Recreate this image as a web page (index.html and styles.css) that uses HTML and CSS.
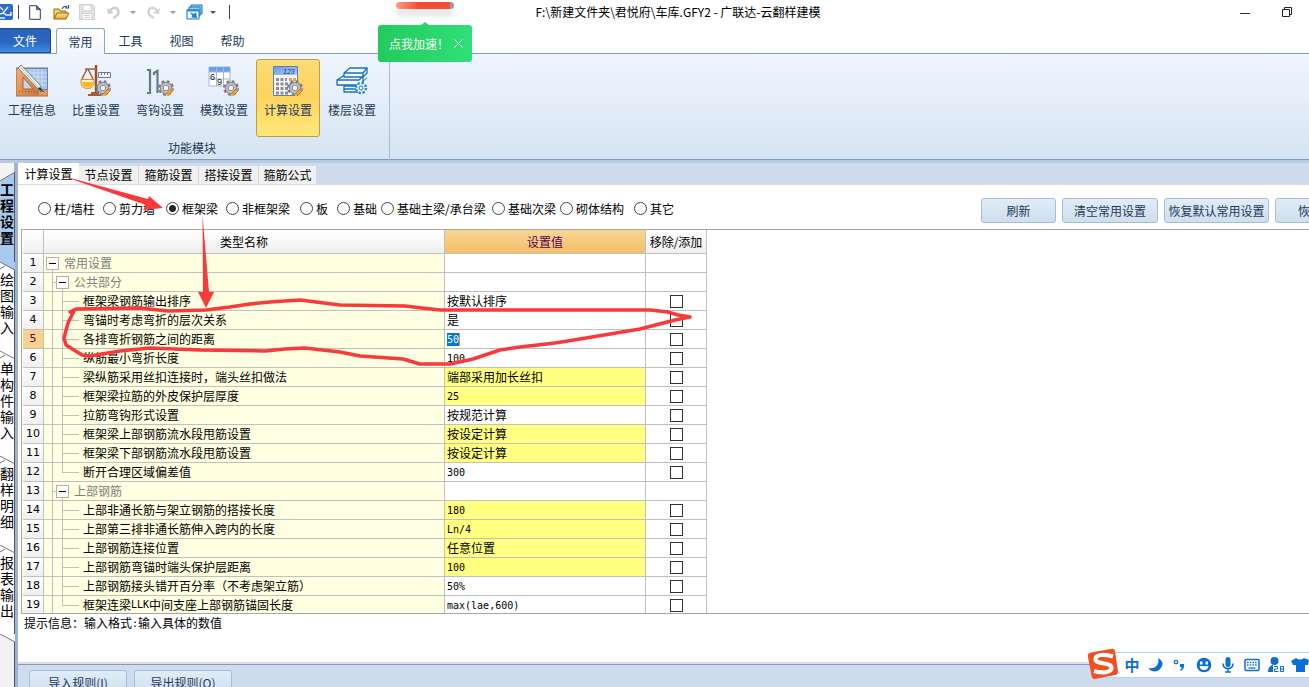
FILE: index.html
```html
<!DOCTYPE html>
<html lang="zh-CN">
<head>
<meta charset="utf-8">
<title>广联达-云翻样建模</title>
<link rel="stylesheet" href="styles.css">
</head>
<body>
<svg class="defs" width="0" height="0" aria-hidden="true">
  <defs>
    <linearGradient id="wood" x1="0" y1="0" x2="1" y2="1"><stop offset="0" stop-color="#f0b070"/><stop offset="1" stop-color="#c9743a"/></linearGradient>
    <linearGradient id="sky" x1="0" y1="0" x2="1" y2="1"><stop offset="0" stop-color="#6f9be8"/><stop offset="1" stop-color="#a9c8fa"/></linearGradient>
    <linearGradient id="folder" x1="0" y1="0" x2="0" y2="1"><stop offset="0" stop-color="#ffe389"/><stop offset="1" stop-color="#eba92c"/></linearGradient>
    <symbol id="gear" viewBox="0 0 17 17">
      <circle cx="8" cy="8" r="6.500" fill="none" stroke="#7c7c80" stroke-width="2.800" stroke-dasharray="2.700 2.400"/>
      <circle cx="8" cy="8" r="4.200" fill="none" stroke="#85858a" stroke-width="4"/>
      <circle cx="8" cy="8" r="4.200" fill="none" stroke="#bdbdc2" stroke-width="2.200"/>
      <circle cx="8" cy="8" r="2.200" fill="#eef3fa"/>
      <path d="M8 16l1-3 4-4 2 2-4 4z" fill="#f7a31c" stroke="#b76412" stroke-width=".6"/>
      <path d="M13.300 8.500l1.200-1.200 1.800 1.800-1.200 1.200z" fill="#c38bd0"/><path d="M8 16l.7-2 1.300 1.300z" fill="#f8e0b0"/>
    </symbol>
  </defs>
</svg>

<div class="window">
  <header class="titlebar">
    <div class="quick">
      <span class="q q-logo"><svg width="14" height="16" viewBox="0 0 14 16"><path d="M0 0h11q2 0 2 2v12q0 2-2 2H0z" fill="#2a6fd0"/><path d="M0 3l3 3M8 3L3 9M0 10q4-2 6 1h5v-3M0 14h5" fill="none" stroke="#e8f2ff" stroke-width="1.500"/></svg></span>
      <span class="q q-sep"><i class="bar"></i></span>
      <button class="q q-new" aria-label="新建"><svg width="12" height="15" viewBox="0 0 12 15"><path d="M.7.700h7l3.600 3.600v10H.7z" fill="#fff" stroke="#2e3f63"/><path d="M7.500.700v4h4z" fill="#4b76b8" stroke="#2e3f63" stroke-width=".7"/></svg></button>
      <button class="q q-open" aria-label="打开"><svg width="17" height="15" viewBox="0 0 17 15"><path d="M1 14V4h5l1 2h6v2" fill="#f9d36b" stroke="#8f6a1b"/><path d="M1 14l3-6h12l-3 6z" fill="url(#folder)" stroke="#8f6a1b"/><path d="M9 4q2-4 5-2M12 3h3.500V0" fill="none" stroke="#35536b" stroke-width="1.200"/></svg></button>
      <button class="q q-save" aria-label="保存"><svg width="16" height="16" viewBox="0 0 16 16"><path d="M.5.500h13l2 2v13H.5z" fill="#e4e4e4" stroke="#d0d0d0"/><path d="M4 1h8v6H4z" fill="#fff" stroke="#d0d0d0"/><path d="M3 9.500h10v6H3zM5 11.500h6M5 13.500h6" fill="#fff" stroke="#d0d0d0"/></svg></button>
      <button class="q q-undo" aria-label="撤销"><svg width="13" height="13" viewBox="0 0 13 13"><path d="M2 5q7-6 9-1t-5 8" fill="none" stroke="#cdcdcd" stroke-width="2.400"/><path d="M0 2l1 6 6-1z" fill="#cdcdcd"/></svg></button>
      <button class="q q-caret" aria-label="撤销列表"><i class="caret dim"></i></button>
      <button class="q q-undo" aria-label="恢复"><svg width="13" height="13" viewBox="0 0 13 13"><path d="M11 5Q4-1 2 4t5 8" fill="none" stroke="#d3d3d3" stroke-width="2.400"/><path d="M13 2l-1 6-6-1z" fill="#d3d3d3"/></svg></button>
      <button class="q q-caret" aria-label="恢复列表"><i class="caret dim"></i></button>
      <button class="q q-win" aria-label="窗口"><svg width="17" height="16" viewBox="0 0 17 16"><path d="M5 1h11v9H5z" fill="#9cd2f5" stroke="#2272b8"/><path d="M3 3h11v9H3z" fill="#9cd2f5" stroke="#2272b8"/><path d="M1 5.500h12v9.500H1z" fill="#f4fbff" stroke="#2272b8"/><path d="M1 5h12v2.500H1z" fill="#2e8fd8"/><path d="M4 8l4 2 2-2 1 6-6-.5 1.500-1.500z" fill="#1383d8"/></svg></button>
      <button class="q q-more" aria-label="更多"><i class="caret"></i></button>
      <span class="q q-end"><i class="bar"></i></span>
    </div>
    <h1 class="caption">F:\新建文件夹\君悦府\车库.GFY2 - 广联达-云翻样建模</h1>
    <div class="controls">
      <button aria-label="最小化"><svg width="10" height="10"><path d="M0 5.500h10" stroke="#333"/></svg></button>
      <button aria-label="还原"><svg width="11" height="11"><path d="M.5 2.500h7v7h-7zM2.500 2.500v-2h7v7h-2" fill="none" stroke="#222"/></svg></button>
    </div>
  </header>

  <nav class="menus">
    <button class="menu file">文件</button>
    <button class="menu current">常用</button>
    <button class="menu">工具</button>
    <button class="menu">视图</button>
    <button class="menu">帮助</button>
  </nav>

  <section class="ribbon">
    <div class="group">
      <div class="tools">
        <button class="tool"><svg width="32" height="32" viewBox="0 0 32 32"><path d="M0 3h32v28H0z" fill="#e09a5c" stroke="#b0683a"/><path d="M6 3.500h25.500v21H6z" fill="#aac3e6" stroke="#6482b4"/><path d="M10 4v21M14 4v21M18 4v21M22 4v21M26 4v21M6 8h25M6 12h25M6 16h25M6 20h25" stroke="#d5e3f6" stroke-width=".8"/><path d="M1 4h4l18 21v5H1z" fill="url(#wood)"/><path d="M7 12l10 12H7z" fill="#c5d6ec" stroke="#a5622f"/><path d="M3 26.500h27" stroke="#8b522e" stroke-dasharray="1 2"/><path d="M2 3l3-3 19 20 3 6-6-3z" fill="#eef1ef" stroke="#74827f"/><path d="M4 2l19 21" stroke="#b4c0be"/><path d="M24 22l3.500 5-5.500-3z" fill="#12365a"/></svg>工程信息</button>
        <button class="tool"><svg width="32" height="32" viewBox="0 0 32 32"><path d="M8 30h13M11 28h8" stroke="#a85b33" stroke-width="2"/><path d="M16 0v28" stroke="#9d5130" stroke-width="2.500"/><path d="M5 4h11M7 4L2 14M8 4l5 10" fill="none" stroke="#a65e38" stroke-width="1.500"/><path d="M1 14.500h13q1 9-6.500 9t-6.500-9z" fill="#fff4c8" stroke="#d88b24"/><path d="M2 17h11q0 5.500-5.500 5.500T2 17z" fill="#ffb81e"/><path d="M18.500 7.500h12v5h-12z" fill="#f5f8fc" stroke="#637d96"/><path d="M21.500 8v2M24.500 8v2M27.500 8v2" stroke="#637d96"/><use href="#gear" x="15" y="15" width="17" height="17"/></svg>比重设置</button>
        <button class="tool"><svg width="32" height="32" viewBox="0 0 32 32"><path d="M3 5h3v23H3M10 10V8l3.500-2v22" fill="none" stroke="#66788a" stroke-width="2.200"/><use href="#gear" x="14" y="15" width="17" height="17"/></svg>弯钩设置</button>
        <button class="tool"><svg width="32" height="32" viewBox="0 0 32 32"><path d="M1 2h21v19H1z" fill="#fff" stroke="#a2b8d6"/><path d="M1 2h21v5H1z" fill="#6d9eed"/><path d="M8.500 2v19M15.500 2v19M1 7h21M1 14h21" stroke="#a2b8d6"/><text x="2" y="15" class="glyph">6</text><text x="9" y="20" class="glyph">9</text><use href="#gear" x="15" y="15" width="17" height="17"/></svg>模数设置</button>
        <button class="tool active"><svg width="32" height="32" viewBox="0 0 32 32"><path d="M1.500 1.500h24v29h-24z" fill="#f4f7fc" stroke="#5c7fae"/><path d="M2 2h23v8H2z" fill="url(#sky)"/><text x="11" y="9" class="lcd">123</text><g fill="none" stroke="#8c8c93" stroke-width="3" stroke-dasharray="3 1.500"><path d="M4 14.500h11M4 19h19M4 23.500h16M4 28h13"/></g><path d="M17 14.500h7" stroke="#e4a25c" stroke-width="3" stroke-dasharray="3 1"/><use href="#gear" x="15" y="15" width="17" height="17"/></svg>计算设置</button>
        <button class="tool"><svg width="32" height="32" viewBox="0 0 32 32"><g fill="#f2f8ff" stroke="#1a70bf" stroke-width="1.300" stroke-linejoin="round"><path d="M8 21h20v6H8z"/><path d="M1 15l6-4h20v9H1z"/><path d="M8 8l6-5h17v5l-4 4H8z"/><path d="M8 8h19l4-5M27 8v4M1 15h22l4-4M8 24h18" fill="none"/></g><path d="M31 13l-5 4" stroke="#1a70bf"/><circle cx="25" cy="23" r="5" fill="#e8f5ff" stroke="#2b91d0" stroke-width="2.500" stroke-dasharray="2.200 1.700"/><circle cx="25" cy="23" r="2" fill="#fff" stroke="#1a70bf"/></svg>楼层设置</button>
      </div>
      <div class="group-title">功能模块</div>
    </div>
  </section>

  <div class="workspace">
    <aside class="rail">
      <button class="side on"><svg width="15" height="18"><path d="M0 0h15v9L0 18z" fill="#f4f4f4"/><path d="M0 18l15-9V0" fill="none" stroke="#777"/></svg><b>工程设置</b></button>
      <button class="side"><svg width="15" height="9"><path d="M0 0l15 9V0z" fill="#a6caf0"/><path d="M0 0l15 8M0 7l5-3" fill="none" stroke="#777"/></svg><span>绘图输入</span></button>
      <button class="side"><svg width="15" height="9"><path d="M0 0l15 8M0 7l5-3" fill="none" stroke="#777"/></svg><span>单构件输入</span></button>
      <button class="side"><svg width="15" height="9"><path d="M0 0l15 8M0 7l5-3" fill="none" stroke="#777"/></svg><span>翻样明细</span></button>
      <button class="side"><svg width="15" height="9"><path d="M0 0l15 8M0 7l5-3" fill="none" stroke="#777"/></svg><span>报表输出</span></button>
      <svg class="tail" width="15" height="9"><path d="M0 0l15 8V0z" fill="#fff"/><path d="M0 0l15 8" stroke="#777"/></svg>
    </aside>

    <main class="page">
      <div class="tabs">
        <button class="tab on">计算设置</button>
        <button class="tab">节点设置</button>
        <button class="tab">箍筋设置</button>
        <button class="tab">搭接设置</button>
        <button class="tab">箍筋公式</button>
      </div>

      <div class="filters">
        <div class="radios">
          <label><input type="radio" name="part">柱/墙柱</label>
          <label><input type="radio" name="part">剪力墙</label>
          <label><input type="radio" name="part" checked>框架梁</label>
          <label><input type="radio" name="part">非框架梁</label>
          <label><input type="radio" name="part">板</label>
          <label><input type="radio" name="part">基础</label>
          <label><input type="radio" name="part">基础主梁/承台梁</label>
          <label><input type="radio" name="part">基础次梁</label>
          <label><input type="radio" name="part">砌体结构</label>
          <label><input type="radio" name="part">其它</label>
        </div>
        <div class="actions">
          <button class="btn short">刷新</button>
          <button class="btn mid">清空常用设置</button>
          <button class="btn long">恢复默认常用设置</button>
          <button class="btn rest">恢</button>
        </div>
      </div>

      <div class="sheet">
        <table>
          <colgroup><col class="c-no"><col class="c-name"><col class="c-val"><col class="c-chk"></colgroup>
          <thead><tr><th></th><th>类型名称</th><th class="hot">设置值</th><th>移除/添加</th></tr></thead>
          <tbody>
            <tr><th>1</th><td class="name"><div class="node root"><button class="fold" aria-label="折叠"></button>常用设置</div></td><td></td><td></td></tr>
            <tr><th>2</th><td class="name"><div class="node branch"><button class="fold" aria-label="折叠"></button>公共部分</div></td><td></td><td></td></tr>
            <tr><th>3</th><td class="name"><div class="node leaf">框架梁钢筋输出排序</div></td><td>按默认排序</td><td><input type="checkbox" aria-label="第3行"></td></tr>
            <tr><th>4</th><td class="name"><div class="node leaf">弯锚时考虑弯折的层次关系</div></td><td>是</td><td><input type="checkbox" aria-label="第4行"></td></tr>
            <tr><th class="hot">5</th><td class="name"><div class="node leaf">各排弯折钢筋之间的距离</div></td><td><input class="edit" type="text" value="50" aria-label="各排弯折钢筋之间的距离"></td><td><input type="checkbox" aria-label="第5行"></td></tr>
            <tr><th>6</th><td class="name"><div class="node leaf">纵筋最小弯折长度</div></td><td><span class="mono">100</span></td><td><input type="checkbox" aria-label="第6行"></td></tr>
            <tr><th>7</th><td class="name"><div class="node leaf">梁纵筋采用丝扣连接时，端头丝扣做法</div></td><td class="changed">端部采用加长丝扣</td><td><input type="checkbox" aria-label="第7行"></td></tr>
            <tr><th>8</th><td class="name"><div class="node leaf">框架梁拉筋的外皮保护层厚度</div></td><td class="changed"><span class="mono">25</span></td><td><input type="checkbox" aria-label="第8行"></td></tr>
            <tr><th>9</th><td class="name"><div class="node leaf">拉筋弯钩形式设置</div></td><td>按规范计算</td><td><input type="checkbox" aria-label="第9行"></td></tr>
            <tr><th>10</th><td class="name"><div class="node leaf">框架梁上部钢筋流水段甩筋设置</div></td><td class="changed">按设定计算</td><td><input type="checkbox" aria-label="第10行"></td></tr>
            <tr><th>11</th><td class="name"><div class="node leaf">框架梁下部钢筋流水段甩筋设置</div></td><td class="changed">按设定计算</td><td><input type="checkbox" aria-label="第11行"></td></tr>
            <tr><th>12</th><td class="name"><div class="node leaf last">断开合理区域偏差值</div></td><td><span class="mono">300</span></td><td><input type="checkbox" aria-label="第12行"></td></tr>
            <tr><th>13</th><td class="name"><div class="node branch"><button class="fold" aria-label="折叠"></button>上部钢筋</div></td><td></td><td></td></tr>
            <tr><th>14</th><td class="name"><div class="node leaf">上部非通长筋与架立钢筋的搭接长度</div></td><td class="changed"><span class="mono">180</span></td><td><input type="checkbox" aria-label="第14行"></td></tr>
            <tr><th>15</th><td class="name"><div class="node leaf">上部第三排非通长筋伸入跨内的长度</div></td><td class="changed"><span class="mono">Ln/4</span></td><td><input type="checkbox" aria-label="第15行"></td></tr>
            <tr><th>16</th><td class="name"><div class="node leaf">上部钢筋连接位置</div></td><td class="changed">任意位置</td><td><input type="checkbox" aria-label="第16行"></td></tr>
            <tr><th>17</th><td class="name"><div class="node leaf">上部钢筋弯锚时端头保护层距离</div></td><td class="changed"><span class="mono">100</span></td><td><input type="checkbox" aria-label="第17行"></td></tr>
            <tr><th>18</th><td class="name"><div class="node leaf">上部钢筋接头错开百分率（不考虑架立筋）</div></td><td><span class="mono">50%</span></td><td><input type="checkbox" aria-label="第18行"></td></tr>
            <tr><th>19</th><td class="name"><div class="node leaf last">框架连梁<span class="mono">LLK</span>中间支座上部钢筋锚固长度</div></td><td><span class="mono">max(lae,600)</span></td><td><input type="checkbox" aria-label="第19行"></td></tr>
          </tbody>
        </table>
      </div>
      <p class="hint">提示信息：输入格式<span class="mono">:</span>输入具体的数值</p>
      <footer class="footer">
        <button class="btn rule">导入规则(<u>I</u>)</button>
        <button class="btn rule">导出规则(<u>O</u>)</button>
      </footer>
    </main>
  </div>

  <div class="gauge"></div>
  <div class="boost"><span>点我加速！</span><button aria-label="关闭"><svg width="9" height="9"><path d="M.5.500l8 8M8.500.500l-8 8" stroke="#fff"/></svg></button></div>

  <div class="ime">
    <svg class="ime-logo" width="32" height="32" viewBox="0 0 32 32"><path d="M4 4.500L25 .7q2.500-.4 3 2l3 21q.3 2.400-2 3L8 31q-2.500.4-3.200-2L.8 8Q.5 5 4 4.500z" fill="#f0501e"/><path d="M26 8.500C18 5.500 8 6.500 8.500 11.500c.5 5 15.500 2.500 16 8 .4 5-10 6-17.500 3.500" fill="none" stroke="#fff" stroke-width="4.200"/></svg>
    <span class="ime-text">中</span>
    <svg width="24" height="16" viewBox="0 0 24 16"><path d="M14 1q6 3 4 8-3 7-10 5-3-1-3.500-3 5 1 8-2 3-4 1.500-8z" fill="#0a6fd6"/></svg>
    <svg width="24" height="16" viewBox="0 0 24 16"><circle cx="8" cy="5" r="1.700" fill="none" stroke="#0a6fd6" stroke-width="1.300"/><path d="M12 7h4q1 4-3 7l-1-1q2-1 1.500-3H12z" fill="#0a6fd6"/></svg>
    <svg width="24" height="16" viewBox="0 0 24 16"><circle cx="12" cy="8" r="7.300" fill="#0a6fd6"/><path d="M8 4.500h2.500v3H8zM13.500 4.500H16v3h-2.500zM7.500 9h9q-.5 4-4.500 4t-4.500-4z" fill="#fff"/></svg>
    <svg width="24" height="16" viewBox="0 0 24 16"><rect x="9.500" y="0" width="5" height="10" rx="2.500" fill="#0a6fd6"/><path d="M7 6.500q0 5 5 5t5-5M12 11v4M9 15h6" fill="none" stroke="#0a6fd6" stroke-width="1.500"/></svg>
    <svg width="24" height="16" viewBox="0 0 24 16"><rect x="5" y="2.500" width="14" height="11" rx="1" fill="#fff" stroke="#0a6fd6" stroke-width="1.500"/><path d="M7 5.500h10M7 8h10" stroke="#0a6fd6" stroke-width="1.500" stroke-dasharray="1.500 1.200"/><path d="M8.500 11h7" stroke="#0a6fd6" stroke-width="1.300"/></svg>
    <svg width="24" height="16" viewBox="0 0 24 16"><circle cx="10.500" cy="4" r="4" fill="#0a6fd6"/><path d="M4 15q0-6 4.500-7h4q3 1 3.500 3v4z" fill="#0a6fd6"/><path d="M9 8h12v8H9z" fill="#fff"/><path d="M10 9.500h3.500v2.500h-3v2.500h4M16.500 9.500h3v5h-3zM16.500 12h3" fill="none" stroke="#0a6fd6"/></svg>
    <svg width="24" height="16" viewBox="0 0 24 16"><path d="M8 1q4 3 8 0l5 2-1 5h-3v7H8V8H5L3 4z" fill="#0a6fd6"/></svg>
  </div>

  <svg class="marks" width="700" height="370" viewBox="0 0 700 370" aria-hidden="true">
    <g fill="#f93a3a">
      <path d="M61 175.500L148 199l1-3 14 12-20 2 3-5z"/>
      <path d="M202.500 215L209 292h5l-8 16-8-16h5z"/>
    </g>
    <path d="M70 312L76 309L140 308L168 311L206 310L230 307L250 304L270 302L300 300L340 305L405 306L422 308L440 310L650 310L668 312L678 315L690 317L675 320L640 329L610 334L580 339L555 343L520 347L500 350L473 359L450 364L420 364L403 359L360 356L340 352L305 348L285 349L265 351L200 350L150 348L120 351L90 356L82 355L66 345L64 338L68 323L74 311" fill="none" stroke="#f93a3a" stroke-width="3.500" stroke-linejoin="round" stroke-linecap="round"/>
  </svg>
</div>
</body>
</html>
```
FILE: styles.css
```css
* { box-sizing: border-box; }

body {
  margin: 0;
  font: 12px/18px "Noto Sans CJK SC", sans-serif;
  color: #000;
  background: #fff;
}

button {
  margin: 0;
  padding: 0;
  border: 0;
  background: none;
  font: inherit;
  color: inherit;
  white-space: nowrap;
}

.defs { position: absolute; }

.window {
  position: relative;
  display: flex;
  flex-direction: column;
  height: 100vh;
  overflow: hidden;
}

/* title bar */
.titlebar { display: flex; height: 28px; flex: none; }
.quick { display: flex; width: 240px; height: 24px; }
.q { display: flex; align-items: center; justify-content: center; flex: none; }
.q-logo { width: 14px; }
.q-sep { width: 9px; }
.q-new, .q-save { width: 24px; }
.q-open, .q-undo { width: 28px; }
.q-caret { width: 12px; }
.q-win { width: 30px; }
.q-more { width: 8px; }
.q-end { width: 24px; }
.bar { width: 1px; height: 14px; background: #444; }
.caret { border: 3px solid transparent; border-top-color: #555; border-bottom: 0; }
.caret.dim { border-top-color: #999; }

.caption {
  flex: 1;
  margin: 0;
  font-size: 12px;
  font-weight: 400;
  line-height: 24px;
  text-align: center;
  white-space: nowrap;
}

.controls { display: flex; justify-content: flex-end; width: 193px; height: 26px; }
.controls button { width: 43px; }

/* menu strip */
.menus {
  display: flex;
  flex: none;
  height: 26px;
  border-bottom: 1px solid #7d9cbf;
  color: #1e395b;
}
.menu { width: 51px; height: 25px; padding-top: 1px; }
.menu.file {
  margin-right: 5px;
  color: #fff;
  background: linear-gradient(#2a62b8, #2a66c0 55%, #3f8be0);
  border: 1px solid #1d4b93;
  border-left: 0;
  border-radius: 0 3px 0 0;
}
.menu.current {
  width: 49px;
  height: 26px;
  background: linear-gradient(#fff, #eff6ff);
  border: 1px solid #8ca8c6;
  border-bottom: 0;
  border-radius: 3px 3px 0 0;
}

/* ribbon */
.ribbon {
  flex: none;
  height: 109px;
  background: linear-gradient(#eff6ff, #d6e3f2);
  background-clip: padding-box;
  border-bottom: 3px solid #b6cbe3;
  box-shadow: inset 0 -1px #8199b8;
  color: #1e395b;
}
.group {
  width: 390px;
  height: 100%;
  padding-top: 5px;
  border-right: 1px solid #a9bbd2;
}
.tools { display: flex; }
.tool {
  display: flex;
  flex-direction: column;
  align-items: center;
  gap: 4px;
  width: 64px;
  height: 78px;
  padding-top: 5px;
  border: 1px solid transparent;
  border-radius: 3px;
}
.tool.active {
  border-color: #c79b3b;
  background: linear-gradient(#fbdc78, #ffd35e 45%, #ffe77a);
}
.group-title { width: 384px; padding-top: 2px; text-align: center; }
.glyph { font: 9px "Liberation Sans", sans-serif; fill: #111; }
.lcd { font: italic 7px "Liberation Sans", sans-serif; fill: #123a86; }

/* side tabs */
.workspace { display: flex; flex: 1; min-height: 0; }
.rail {
  flex: none;
  width: 18px;
  overflow: hidden;
  border-right: 3px solid #9eb3d2;
  box-shadow: inset -1px 0 #555;
  background: #f2f2f2;
}
.side {
  display: flex;
  flex-direction: column;
  width: 14px;
  padding-bottom: 16px;
  background: #fff;
}
.side svg, .tail { display: block; flex: none; }
.side.on { padding-bottom: 17px; background: #a6caf0; }
.side b, .side span {
  width: 14px;
  font-size: 14px;
  line-height: 16px;
  white-space: normal;
  word-break: break-all;
}

/* page */
.page { display: flex; flex: 1; flex-direction: column; min-width: 0; background: #fff; }
.tabs {
  display: flex;
  align-items: flex-end;
  flex: none;
  height: 22px;
  background: #cfdcee;
  border-bottom: 1px solid #dcdcdc;
}
.tab {
  width: 60px;
  height: 18px;
  background: #f0f0f0;
  border-right: 1px solid #d8d8d8;
}
.tab.on { width: 61px; height: 21px; background: #fff; border: 0; }
.tab:last-child { width: 58px; }

.filters { display: flex; flex: none; height: 44px; overflow: hidden; }
.radios {
  display: grid;
  flex: 1;
  grid-template-columns: 65px 63px 60px 74px 37px 44px 111px 68px 74px 1fr;
  align-items: center;
  padding: 3px 0 0 20px;
}
.radios label { display: flex; align-items: center; gap: 3px; white-space: nowrap; }
.radios input {
  appearance: none;
  flex: none;
  width: 13px;
  height: 13px;
  margin: 0;
  border: 1px solid #444;
  border-radius: 50%;
  background: #fff;
}
.radios input:checked { background: radial-gradient(circle, #222 0 3px, #fff 4px); }

.actions { display: flex; gap: 6px; flex: none; width: 328px; padding-top: 13px; overflow: hidden; }
.btn {
  flex: none;
  height: 25px;
  border: 1px solid #a9bbdb;
  border-radius: 3px;
  background: linear-gradient(#e1ecf8, #cfdeed);
  color: #1e395b;
}
.short { width: 75px; }
.mid { width: 96px; }
.long { width: 105px; }
.rest { width: 105px; padding-left: 22px; text-align: left; }

/* settings sheet */
.sheet {
  flex: 1;
  min-height: 0;
  margin-left: 3px;
  padding-left: 1px;
  overflow: hidden;
  border: 1px solid #a8a8a8;
  border-right: 0;
}
table { width: 684px; table-layout: fixed; border-collapse: separate; border-spacing: 0; }
.c-no { width: 21px; }
.c-name { width: 401px; }
.c-val { width: 201px; }
.c-chk { width: 61px; }
th, td {
  height: 19px;
  padding: 0;
  border-right: 1px solid #c0c0c0;
  border-bottom: 1px solid #c0c0c0;
  font-weight: 400;
  line-height: 18px;
  white-space: nowrap;
}
th { background: linear-gradient(#fff, #efefef); }
thead th { height: 24px; }
thead th.hot { background: linear-gradient(#f9d596, #f1c067); color: #5a0058; }
tbody th { font: 11px/18px "DejaVu Sans", sans-serif; }
tbody th.hot { background: #fbcf8c; color: #5a0058; }
td:nth-child(3) { padding-left: 2px; }
td:nth-child(4) { text-align: center; }
td.changed { background: #ffff80; }
td.name { background: #ffffe1; }
.mono {
  font-family: "DejaVu Sans Mono", monospace;
  font-size: 10px;
  line-height: 10px;
  vertical-align: 1px;
}

.node {
  display: flex;
  align-items: center;
  height: 18px;
  background-repeat: no-repeat;
  background-image:
    linear-gradient(#c0c0c0, #c0c0c0),
    linear-gradient(#c0c0c0, #c0c0c0),
    linear-gradient(#c0c0c0, #c0c0c0);
}
.root {
  gap: 5px;
  padding-left: 2px;
  color: #808080;
  background-position: 8px 9px;
  background-size: 1px 9px, 0 0, 0 0;
}
.branch {
  gap: 5px;
  padding-left: 12px;
  color: #808080;
  background-position: 8px 0, 8px 9px, 18px 9px;
  background-size: 1px 18px, 4px 1px, 1px 9px;
}
.leaf {
  padding-left: 39px;
  background-position: 8px 0, 18px 0, 18px 9px;
  background-size: 1px 18px, 1px 18px, 17px 1px;
}
.leaf.last { background-size: 1px 18px, 1px 9px, 17px 1px; }
.fold {
  width: 13px;
  height: 13px;
  border: 1px solid #b0b0b0;
  background: linear-gradient(#000, #000) center / 7px 1px no-repeat #fff;
}

td input[type="checkbox"] {
  appearance: none;
  display: block;
  width: 13px;
  height: 13px;
  margin: 0 auto;
  border: 1px solid #333;
  background: #fff;
}
.edit {
  display: block;
  width: 13px;
  height: 13px;
  padding: 0;
  border: 0;
  border-right: 1px solid #e89040;
  background: #0078d7;
  color: #fff;
  font: 10px/13px "DejaVu Sans Mono", monospace;
}

.hint { flex: none; height: 50px; margin: 0 0 0 6px; }
.footer {
  display: flex;
  gap: 7px;
  flex: none;
  height: 23px;
  padding: 5px 11px 0;
  overflow: hidden;
  background: #cfdcee;
  border-top: 1px solid #7f9cc8;
  box-shadow: 0 -2px #e0e0e0;
}
.rule { width: 98px; }

/* floating parts */
.gauge {
  position: absolute;
  top: 2px;
  left: 396px;
  width: 58px;
  height: 7px;
  border-radius: 4px;
  background: linear-gradient(90deg, #ff9a80, #ff4a30 40%, #ff4a30 92%, #999 93%);
  box-shadow: 0 6px 7px #ddd;
}
.boost {
  position: absolute;
  top: 25px;
  left: 378px;
  display: flex;
  align-items: center;
  justify-content: space-between;
  width: 94px;
  height: 37px;
  padding: 0 9px 0 11px;
  border-radius: 3px;
  background: linear-gradient(90deg, #22cb5c, #30df7a);
  color: #fff;
  white-space: nowrap;
}
.boost span { width: 60px; }
.boost button { display: flex; }
.boost::before {
  content: "";
  position: absolute;
  top: -3px;
  left: 43px;
  border: 4px solid transparent;
  border-top: 0;
  border-bottom: 3px solid #2ad56c;
}
.ime {
  position: absolute;
  right: 0;
  bottom: 9px;
  display: flex;
  align-items: center;
  width: 209px;
  height: 26px;
  padding-left: 19px;
  border: 1px solid #b5d2ec;
  border-right: 0;
  background: #fff;
}
.ime svg { flex: none; }
.ime .ime-logo { position: absolute; left: -14px; top: -5px; }
.ime-text { flex: none; width: 24px; text-align: center; font-size: 15px; font-weight: 700; color: #0a6fd6; }
.marks { position: absolute; top: 0; left: 0; pointer-events: none; }
```
